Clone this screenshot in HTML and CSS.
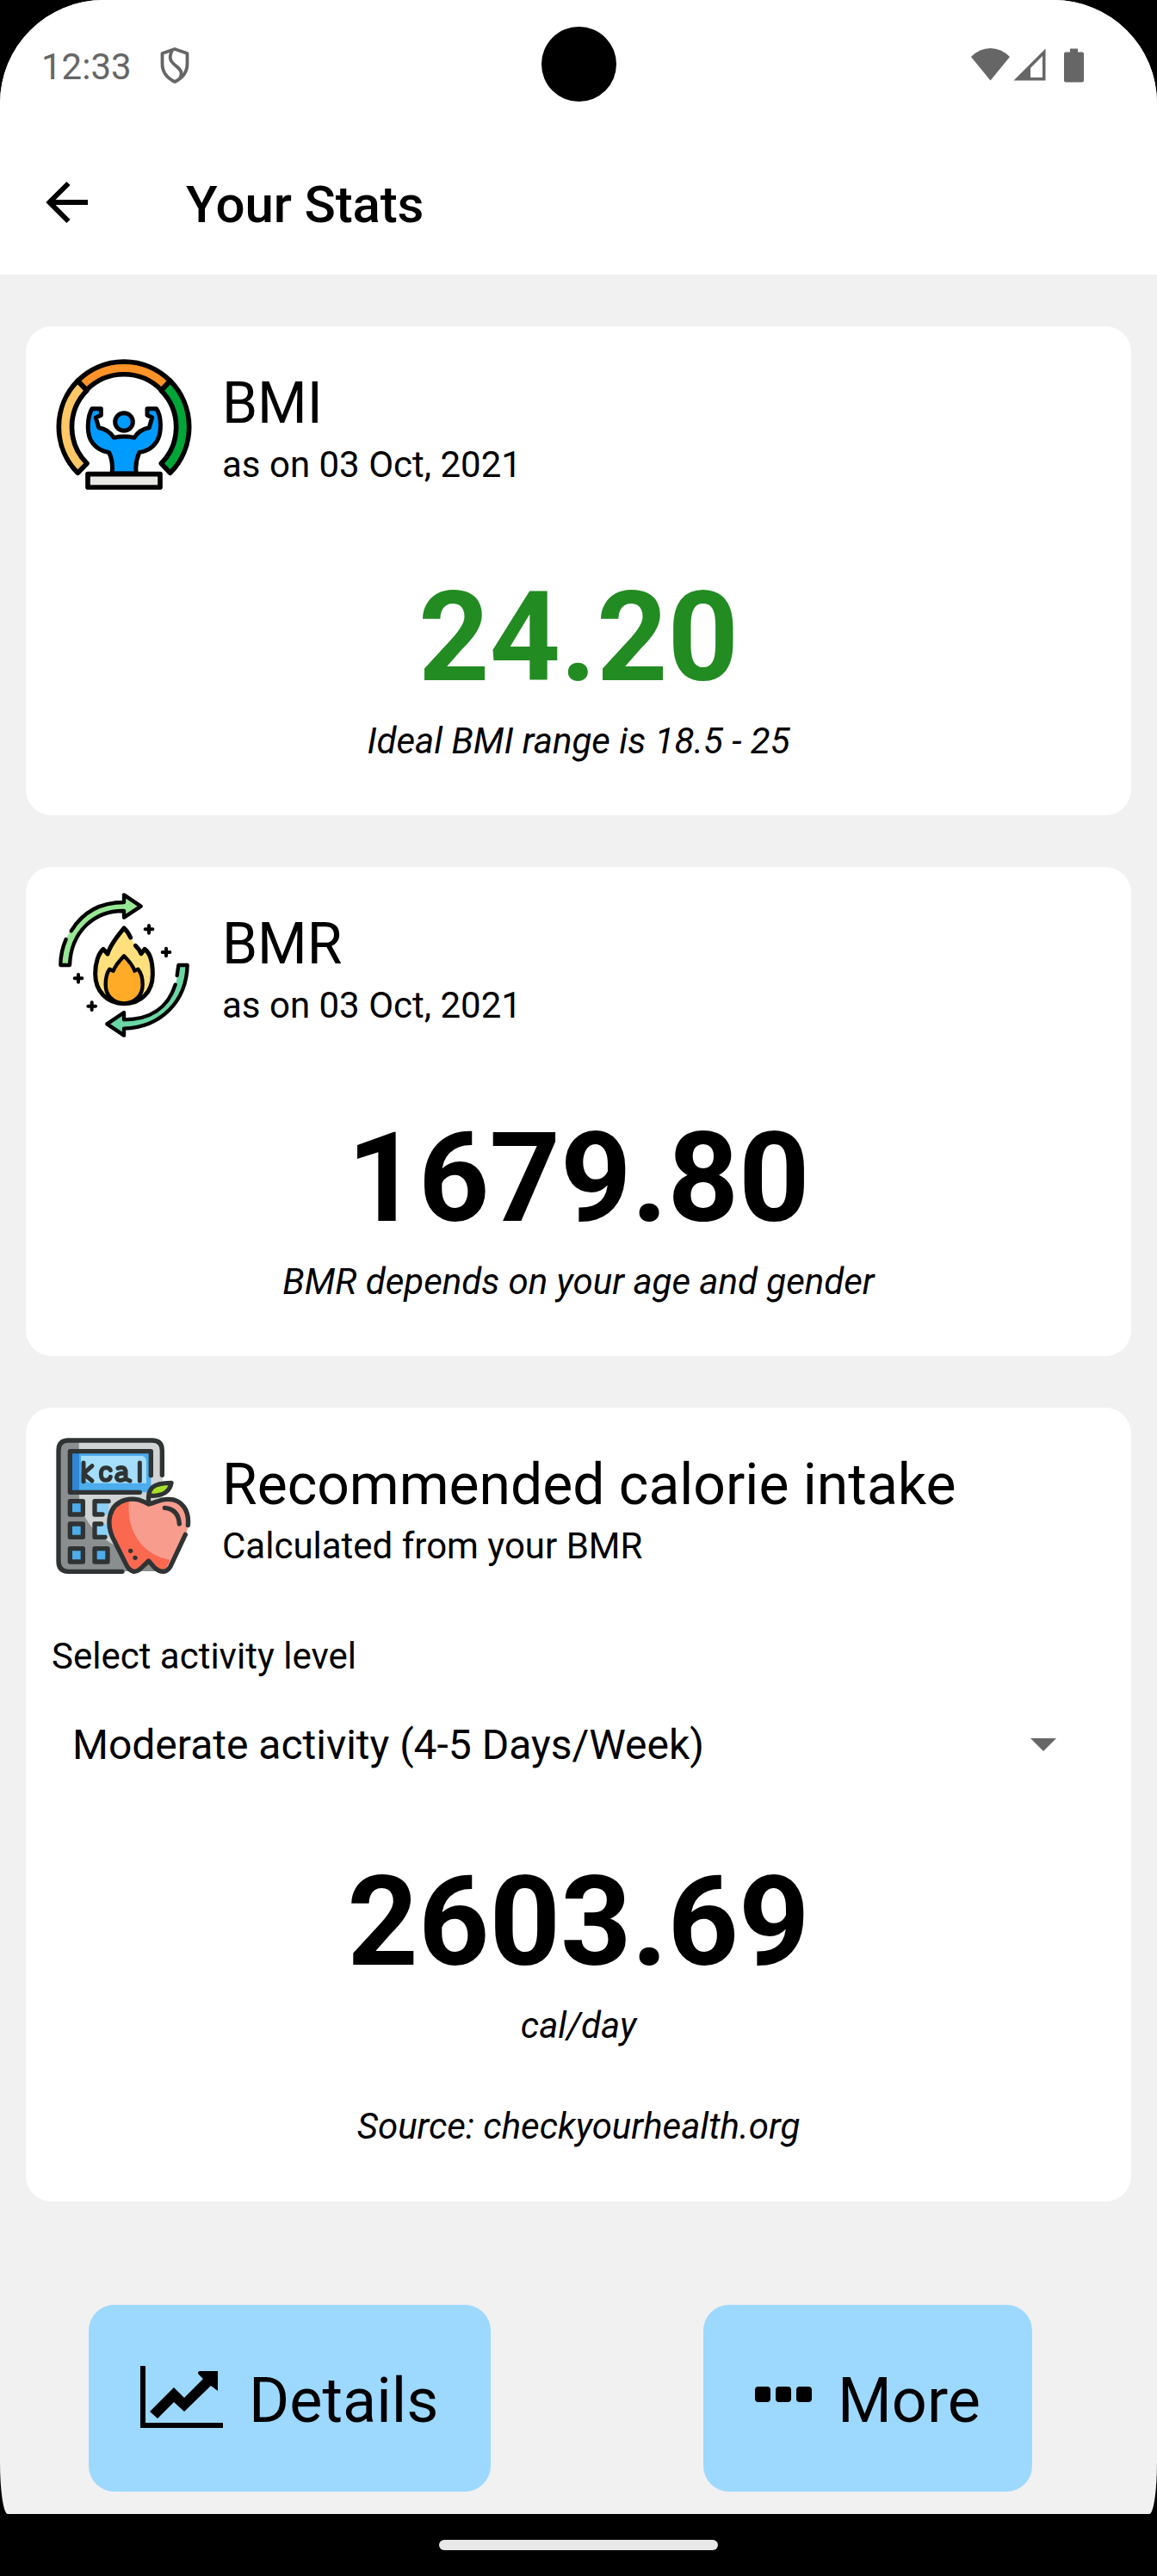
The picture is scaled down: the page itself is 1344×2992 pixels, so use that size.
FILE: index.html
```html
<!DOCTYPE html>
<html lang="en">
<head>
<meta charset="utf-8">
<title>Your Stats</title>
<link rel="stylesheet" href="styles.css">
</head>
<body>
<div class="screen">
  <div class="statusbar">
    <span class="clock">12:33</span>
    <svg class="shield" width="36" height="44" viewBox="0 0 36 44" fill="none" stroke="#666" stroke-width="3.8" stroke-linejoin="round"><path d="M18 3L32.500 8V20Q32.500 34 18 41Q3.500 34 3.500 20V8Z"/><path d="M15 4C10 15 14 18 20 23C26 28 27 31 24 37"/></svg>
    <span class="camera"></span>
    <svg class="signals" width="132" height="52" viewBox="0 0 132 52" fill="#666"><path d="M0 10Q10 0 22.500 0T45 10L22.500 37.500Z"/><path fill-rule="evenodd" d="M49.500 37.500L86.500 0.500V37.500ZM69 34H83V9L69 23Z"/><path d="M115 0.500h9v4h5q2 0 2 2v31q0 2-2 2h-19q-2 0-2-2v-31q0-2 2-2h5z"/></svg>
  </div>
  <header class="appbar">
    <svg class="back" width="50" height="50" viewBox="0 0 50 50" fill="none" stroke="#000" stroke-width="6"><path d="M49 25H5M26.500 3L4.500 25L26.500 47"/></svg>
    <h1 class="title">Your Stats</h1>
  </header>
  <main class="content">
    <section class="card">
      <div class="head">
        <svg class="icon" viewBox="0 0 570 570" stroke="#000" stroke-width="17" stroke-linejoin="round" stroke-linecap="round">
          <path fill="#ffc765" d="M121 127A228 228 0 0 0 121 448L153 415A181 181 0 0 1 152 161Z"/>
          <path fill="#00a637" d="M443 127A228 228 0 0 1 443 448L412 415A181 181 0 0 0 412 161Z"/>
          <path fill="#ff9328" d="M121 127A228 228 0 0 1 443 127L412 159A182 182 0 0 0 152 159Z"/>
          <path fill="#009bff" stroke-width="15" d="M171 224H202V247L184 255L194 290C220 294 234 305 247 325C270 320 295 320 318 325C330 305 348 294 370 290L380 255L363 247V224H395C413 250 414 306 398 335C382 362 362 371 335 377C326 398 320 418 325 450H240C244 420 240 398 230 377C202 370 183 362 166 333C153 307 153 253 171 224Z"/>
          <circle cx="282" cy="270" r="31" fill="#009bff" stroke-width="15"/>
          <path fill="#e8e8e5" d="M156 452H408V498H156Z"/>
        </svg>
        <div class="names"><h2 class="name">BMI</h2><p class="sub">as on 03 Oct, 2021</p></div>
      </div>
      <p class="value good">24.20</p>
      <p class="note">Ideal BMI range is 18.5 - 25</p>
    </section>
    <section class="card">
      <div class="head">
        <svg class="icon" viewBox="0 24 570 570" fill="none" stroke="#000" stroke-width="13" stroke-linejoin="round" stroke-linecap="round">
          <path fill="#98e795" stroke="none" d="M62 304H94C98 180 180 112 282 114V136L341 98L282 58V84C145 86 65 182 62 304Z"/>
          <path d="M98 184C140 115 205 84 282 84V58L341 98L282 137V114C180 112 97 185 93 303H61C61 270 68 240 80 213"/>
          <path fill="#6bd6a5" stroke="none" d="M503 304H472C468 425 395 492 282 493V468L223 508L282 548V524C420 522 500 425 503 304Z"/>
          <path d="M467 339L472 303H503C500 425 415 520 282 524V548L223 508L282 468V493C370 493 435 455 461 371"/>
          <path fill="#ffe07c" stroke="none" d="M282 175L342 262L356 247C373 260 382 294 382 335C382 394 344 437 282 437S183 393 183 335C183 292 193 257 211 247L224 263Z"/>
          <path stroke-width="15" d="M305 207C296 188 289 180 282 174C267 192 235 230 225 264L210 247C193 262 182 295 182 333C182 393 222 437 282 437S382 396 382 335C382 296 373 260 354 247L342 263C337 251 330 242 322 235"/>
          <path fill="#ffab27" d="M282 271C268 286 252 302 245 323L232 317C222 330 218 350 218 371C218 408 244 436 282 436S347 408 347 371C347 350 342 330 331 317L319 323C312 302 296 285 282 271Z"/>
          <path stroke-width="12" d="M369 165v26M356 178h26M429 245v26M416 258h26M123 336v26M110 349h26M170 433v26M157 446h26"/>
        </svg>
        <div class="names"><h2 class="name">BMR</h2><p class="sub">as on 03 Oct, 2021</p></div>
      </div>
      <p class="value">1679.80</p>
      <p class="note">BMR depends on your age and gender</p>
    </section>
    <section class="card intake">
      <div class="head">
        <svg class="icon" viewBox="0 3 570 570" fill="none" stroke="#2f3333" stroke-width="16" stroke-linejoin="round" stroke-linecap="round">
          <path fill="#8b8e8f" stroke="none" d="M85 54H380Q415 54 415 90V510H85Q54 510 54 475V90Q54 54 85 54Z"/>
          <path fill="#cfd3d4" stroke="none" d="M125 54H380Q415 54 415 90V450L250 420Q125 350 125 230Z"/>
          <path fill="#4daceb" stroke="none" d="M94 92H376V235H94Z"/>
          <path fill="#2f86d5" stroke="none" d="M94 92H126V235H94Z"/>
          <path fill="#a5defb" stroke="none" d="M132 108H345Q360 110 360 130V203H170Q136 200 132 160Z"/>
          <path d="M415 175V90Q415 54 380 54H88Q54 54 54 90V475Q54 511 88 511H276"/>
          <path d="M376 176V92H94V235H337"/>
          <path fill="#4daceb" d="M94 266H139V312H94ZM94 345H139V391H94ZM94 431H139V477H94ZM180 431H225V477H180Z"/>
          <path fill="#8bd1f6" stroke="none" d="M180 266H228V312H180ZM180 345H228V391H180Z"/>
          <path d="M228 266H180V312H207M203 345H180V391H216"/>
          <path stroke-width="15" d="M141 132V197M171 143L141 170L171 195M235 158Q231 148 218 149Q202 150 202 171Q202 193 218 193Q232 193 235 181M261 151Q284 143 288 161V188L303 195M288 168Q258 166 256 182Q260 201 286 188M337 132V195"/>
          <path fill="#f89c8e" stroke="none" d="M368 277C345 260 310 249 280 262C225 286 220 345 245 395L293 493Q314 525 341 500L368 474L391 500Q424 525 444 493L497 380C525 325 500 270 445 258C415 252 390 270 368 277Z"/>
          <path fill="#fa6850" stroke="none" d="M301 259C225 263 220 345 245 395L293 493Q314 525 341 500L368 474L391 500Q424 525 442 470C350 455 285 370 301 259Z"/>
          <path d="M505 350C510 300 485 258 436 259C405 258 390 273 368 276C345 265 325 252 285 262C225 280 222 345 242 391L293 493Q314 525 341 500L368 474L391 500Q424 525 444 493L496 382"/>
          <path fill="#a9e129" d="M368 270C364 222 380 202 447 202C441 236 416 248 371 247"/>
          <path d="M424 289Q472 294 475 345"/>
          <circle cx="305" cy="439" r="8" fill="#2f3333" stroke="none"/><circle cx="321" cy="463" r="8" fill="#2f3333" stroke="none"/>
        </svg>
        <div class="names"><h2 class="name">Recommended calorie intake</h2><p class="sub">Calculated from your BMR</p></div>
      </div>
      <p class="label">Select activity level</p>
      <div class="select"><span>Moderate activity (4-5 Days/Week)</span><span class="caret"></span></div>
      <p class="value">2603.69</p>
      <p class="note">cal/day</p>
      <p class="note source">Source: checkyourhealth.org</p>
    </section>
    <div class="actions">
      <button class="btn details"><svg width="96" height="72" viewBox="0 0 96 72"><path d="M0 0H6V66H96V72H0Z"/><path d="M11 53L39 25L51 37L73 15L67 9Q67 6 69 6H90V29L82 23L51 53L39 42L20 61Z"/></svg>Details</button>
      <button class="btn more"><svg width="66" height="72" viewBox="0 0 66 72"><rect y="24" width="18" height="18" rx="4"/><rect x="24" y="24" width="18" height="18" rx="4"/><rect x="48" y="24" width="18" height="18" rx="4"/></svg>More</button>
    </div>
  </main>
</div>
<div class="navbar"><span class="pill"></span></div>
</body>
</html>
```
FILE: styles.css
```css
* { box-sizing: border-box; margin: 0; padding: 0; }
body { width: 1344px; height: 2992px; background: #000; color: #000; font-family: Roboto, sans-serif; overflow: hidden; }
.screen { height: 2920px; background: #f1f1f1; overflow: hidden; border-radius: 120px 120px 9px 9px / 120px 120px 60px 60px; }
.statusbar { position: relative; height: 150px; background: #fff; display: flex; align-items: flex-start; padding: 53px 84px 0 48px; color: #666; }
.clock { font-size: 42px; line-height: 49px; width: 137px; }
.shield { display: block; margin-top: 1px; }
.camera { position: absolute; left: 629px; top: 31px; width: 87px; height: 87px; border-radius: 50%; background: #000; }
.signals { margin-left: auto; margin-top: 3px; }
.appbar { height: 169px; background: #fff; display: flex; align-items: center; padding: 0 53px; }
.title { font-size: 60px; font-weight: 500; line-height: 70px; margin-left: 113px; margin-top: 7px; letter-spacing: -0.15px; }
.content { padding: 60px 30px 0; display: flex; flex-direction: column; }
.card { background: #fff; border-radius: 30px; height: 568px; margin-bottom: 60px; padding: 21px 30px 0; flex: none; }
.intake { height: 922px; }
.head { display: flex; height: 190px; }
.icon { width: 190px; height: 190px; margin-left: -10px; }
.names { padding-top: 30px; margin-left: 18px; }
.name { font-size: 66px; font-weight: 400; line-height: 77px; }
.sub { font-size: 42px; line-height: 49px; margin-top: 8px; }
.value { font-size: 144px; font-weight: 700; line-height: 169px; text-align: center; margin-top: 66px; }
.good { color: #228b22; }
.note { font-size: 42px; line-height: 49px; font-style: italic; text-align: center; margin-top: 11px; }
.label { font-size: 42px; line-height: 49px; margin-top: 53px; }
.select { display: flex; justify-content: space-between; align-items: center; font-size: 48px; height: 72px; margin-top: 42px; padding: 0 57px 0 24px; }
.caret { border: 15px solid transparent; border-top-color: #666; border-bottom: 0; }
.intake .value { margin-top: 86px; }
.intake .source { margin-top: 68px; }
.actions { display: flex; justify-content: space-between; padding: 60px 115px 0 73px; }
.btn { border: 0; border-radius: 30px; height: 217px; background: #9dd8ff; display: flex; align-items: center; font: 400 72px/84px Roboto, sans-serif; gap: 30px; padding: 7px 60px 0; color: #000; }
.btn svg { margin-bottom: 10px; }
.details { width: 467px; }
.more { width: 382px; }
.navbar { height: 72px; display: flex; justify-content: center; align-items: flex-start; padding-top: 30px; }
.pill { width: 324px; height: 12px; border-radius: 6px; background: #e8e8e8; }
```
